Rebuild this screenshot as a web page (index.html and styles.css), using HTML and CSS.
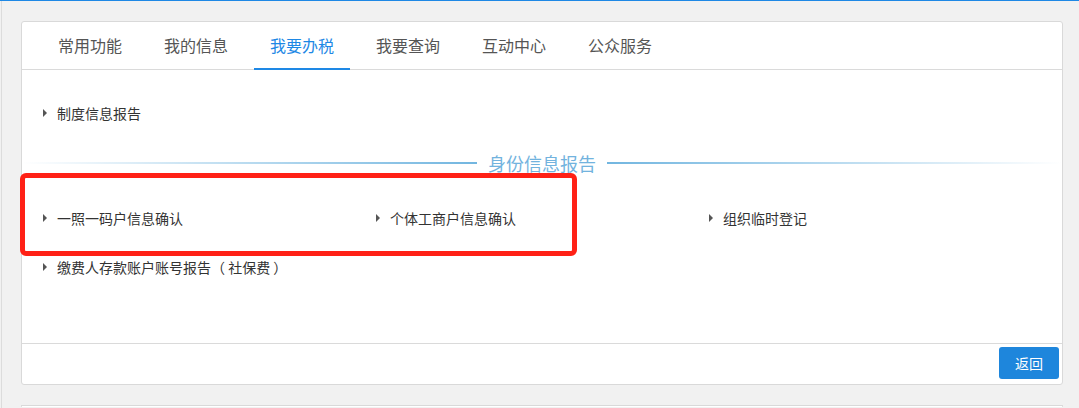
FILE: index.html
```html
<html>
    <head>
        <meta charset="utf-8">
        <link rel="stylesheet" href="styles.css">
    </head>
    <body>
        <div class="page">
            <div class="card">
                <div class="tabs">
                    <span class="tab">常用功能</span>
                    <span class="tab">我的信息</span>
                    <span class="tab active">我要办税</span>
                    <span class="tab">我要查询</span>
                    <span class="tab">互动中心</span>
                    <span class="tab">公众服务</span>
                </div>
                <div class="card-body">
                    <div class="item-row first-row">
                        <span class="item">制度信息报告</span>
                    </div>
                    <div class="divider"><span>身份信息报告</span></div>
                    <div class="item-grid">
                        <span class="item">一照一码户信息确认</span>
                        <span class="item">个体工商户信息确认</span>
                        <span class="item">组织临时登记</span>
                        <span class="item">缴费人存款账户账号报告（ 社保费 ）</span>
                    </div>
                </div>
                <div class="card-footer">
                    <button class="btn-back">返回</button>
                </div>
            </div>
            <div class="card next-card"></div>
        </div>
        <div class="mark-box"></div>
    </body>
</html>
```

FILE: styles.css
```css
html {
    overflow: hidden;
}
body {
    margin: 0px;
    background-color: #f1f1f1;
    border-top: 1px solid #1e88e5;
    font-family: "Noto Sans CJK SC", "Microsoft YaHei", sans-serif;
    overflow: hidden;
    height: 407px;
    position: relative;
}
.page {
    margin-left: 1px;
    border-left: 1px solid #dcdcdc;
    padding: 20px 16px 0px 19px;
    height: 100%;
    box-sizing: border-box;
}
.card {
    width: 1040px;
    background-color: #fff;
    border: 1px solid #d9d9d9;
    border-radius: 3px;
}
.next-card {
    margin-top: 20px;
    height: 1px;
    border-bottom: none;
}
.tabs {
    display: flex;
    height: 47px;
    padding-left: 20px;
    border-bottom: 1px solid #dadada;
}
.tab {
    width: 96px;
    margin-right: 10px;
    height: 46px;
    line-height: 46px;
    text-align: center;
    font-size: 16px;
    color: #555;
}
.tab.active {
    color: #1e88e5;
    border-bottom: 2px solid #1e88e5;
}
.card-body {
    height: 274px;
    padding-top: 33px;
    box-sizing: border-box;
    border-bottom: 1px solid #dadada;
}
.item-row {
    padding-left: 21px;
}
.item {
    display: flex;
    align-items: center;
    height: 20px;
    font-size: 14px;
    color: #333;
}
.item::before {
    content: "";
    width: 0px;
    height: 0px;
    border-top: 4px solid transparent;
    border-bottom: 4px solid transparent;
    border-left: 4px solid #555;
    margin-right: 10px;
}
.divider {
    display: flex;
    align-items: center;
    height: 30px;
    margin-top: 25px;
    font-size: 18px;
    color: #72b3de;
}
.divider span {
    padding: 0px 11px;
}
.divider::before,
.divider::after {
    content: "";
    flex: 1;
    height: 2px;
}
.divider::before {
    background: linear-gradient(to right, rgba(114, 182, 224, 0) 0%, rgba(114, 182, 224, 0.5) 50%, #72b6e0 100%);
}
.divider::after {
    background: linear-gradient(to right, #72b6e0 0%, rgba(114, 182, 224, 0.5) 50%, rgba(114, 182, 224, 0) 100%);
}
.item-grid {
    display: grid;
    grid-template-columns: repeat(3, 333px);
    row-gap: 29px;
    padding-left: 21px;
    margin-top: 30px;
}
.card-footer {
    display: flex;
    justify-content: flex-end;
    padding: 3px 3px 5px 0px;
}
.btn-back {
    width: 60px;
    height: 32px;
    border: none;
    border-radius: 3px;
    background-color: #1e86dc;
    color: #fff;
    font-family: inherit;
    font-size: 14px;
}
.mark-box {
    position: absolute;
    left: 20px;
    top: 172px;
    width: 547px;
    height: 73px;
    border: 5px solid #ff2116;
    border-radius: 6px;
}
```
